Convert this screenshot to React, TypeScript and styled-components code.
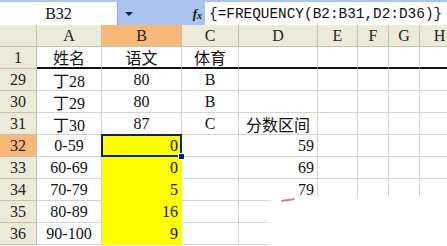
import React from 'react';
import styled, { createGlobalStyle } from 'styled-components';

const Global = createGlobalStyle`
  html, body { margin: 0; padding: 0; background: #fff; overflow: hidden; }
  body { width: 447px; height: 246px; }
`;

const Frame = styled.div`
  position: relative;
  width: 447px;
  height: 246px;
  overflow: hidden;
  background: #fff;
  display: flex;
  flex-direction: column;
`;

const FormulaBar = styled.div`
  display: flex;
  height: 25px;
  flex: none;
  box-sizing: border-box;
  padding-top: 2px;
  background: #a9c4ef;
`;

const NameBox = styled.div`
  width: 117px;
  background: #fff;
  border-right: 1px solid #8aa9dc;
  display: flex;
  align-items: center;
  justify-content: center;
  font: 16px "Liberation Serif", serif;
  color: #111;
`;

const DropZone = styled.div`
  width: 87px;
  display: flex;
  align-items: center;
  padding: 0 3px 0 7px;
  box-sizing: border-box;
`;

const Arrow = styled.span`
  width: 0;
  height: 0;
  border-left: 4px solid transparent;
  border-right: 4px solid transparent;
  border-top: 4px solid #0c1e4a;
`;

const Fx = styled.span`
  margin-left: auto;
  font: italic bold 13px "Liberation Serif", serif;
  color: #111;
  sub { font-size: 10px; vertical-align: -1px; }
`;

const FormulaInput = styled.div`
  flex: 1;
  background: #fff;
  padding-left: 4px;
  display: flex;
  align-items: center;
  font: 14.4px "Liberation Mono", monospace;
  color: #111;
  white-space: nowrap;
  overflow: hidden;
`;

const Sheet = styled.div`
  display: grid;
  grid-template-columns: 37px 65px 80px 57px 79px 40px 31px 31px 40px;
  grid-auto-rows: 22px;
`;

type Align = 'left' | 'center' | 'right';

const Header = styled.div<{ $active?: boolean }>`
  box-sizing: border-box;
  background: ${p => (p.$active ? '#f8b878' : '#ecead9')};
  border-right: 1px solid #c4c0aa;
  border-bottom: 1px solid #c4c0aa;
  display: flex;
  align-items: center;
  justify-content: center;
  font: 16px "Liberation Serif", serif;
  color: #222;
`;

const Cell = styled.div<{ $align: Align; $fill?: boolean; $thick?: boolean; $selected?: boolean }>`
  position: relative;
  box-sizing: border-box;
  background: ${p => (p.$fill ? '#ffff00' : '#fff')};
  border-right: 1px solid ${p => (p.$fill ? '#ffff00' : '#d4d4d4')};
  border-bottom: ${p => (p.$thick ? '2px solid #111' : `1px solid ${p.$fill ? '#ffff00' : '#d4d4d4'}`)};
  display: flex;
  align-items: center;
  justify-content: ${p => (p.$align === 'left' ? 'flex-start' : p.$align === 'right' ? 'flex-end' : 'center')};
  padding: 0 3px;
  font: 16px "Liberation Serif", "Noto Sans CJK SC", serif;
  color: #111;
  white-space: nowrap;
  ${p =>
    p.$selected &&
    `
    &::after {
      content: '';
      position: absolute;
      left: -1px; top: -1px; right: -1px; bottom: -1px;
      border: 2px solid #0a246a;
    }
  `}
`;

const Handle = styled.span`
  position: absolute;
  right: -4px;
  bottom: -4px;
  width: 5px;
  height: 5px;
  background: #0a246a;
  border: 1px solid #fff;
  z-index: 2;
`;

const Smudge = styled.div`
  position: absolute;
  left: 271px;
  top: 198px;
  width: 190px;
  height: 60px;
  background: #fff;
  border-radius: 7px;
  box-shadow: 0 0 3px 2px rgba(255, 255, 255, 0.9);
  &::before {
    content: '';
    position: absolute;
    left: 10px;
    top: 1px;
    width: 14px;
    height: 2px;
    border-radius: 2px;
    background: rgba(190, 40, 40, 0.6);
    transform: rotate(-8deg);
  }
`;

type C = { t?: string; a?: Align; fill?: boolean; sel?: boolean };

const cols = ['A', 'B', 'C', 'D', 'E', 'F', 'G', 'H'];

const rows: { n: string; cells: C[]; thick?: boolean; active?: boolean }[] = [
  { n: '1', thick: true, cells: [{ t: '姓名' }, { t: '语文' }, { t: '体育' }] },
  { n: '29', cells: [{ t: '丁28' }, { t: '80' }, { t: 'B' }] },
  { n: '30', cells: [{ t: '丁29' }, { t: '80' }, { t: 'B' }] },
  { n: '31', cells: [{ t: '丁30' }, { t: '87' }, { t: 'C' }, { t: '分数区间' }] },
  { n: '32', active: true, cells: [{ t: '0-59' }, { t: '0', a: 'right', fill: true, sel: true }, {}, { t: '59', a: 'right' }] },
  { n: '33', cells: [{ t: '60-69' }, { t: '0', a: 'right', fill: true }, {}, { t: '69', a: 'right' }] },
  { n: '34', cells: [{ t: '70-79' }, { t: '5', a: 'right', fill: true }, {}, { t: '79', a: 'right' }] },
  { n: '35', cells: [{ t: '80-89' }, { t: '16', a: 'right', fill: true }, {}, {}] },
  { n: '36', cells: [{ t: '90-100' }, { t: '9', a: 'right', fill: true }, {}, {}] },
];

export default function App() {
  return (
    <Frame>
      <Global />
      <FormulaBar>
        <NameBox>B32</NameBox>
        <DropZone>
          <Arrow />
          <Fx>
            f<sub>x</sub>
          </Fx>
        </DropZone>
        <FormulaInput>{'{=FREQUENCY(B2:B31,D2:D36)}'}</FormulaInput>
      </FormulaBar>
      <Sheet>
        <Header />
        {cols.map(c => (
          <Header key={c} $active={c === 'B'}>
            {c}
          </Header>
        ))}
        {rows.map(r => (
          <React.Fragment key={r.n}>
            <Header $active={r.active}>{r.n}</Header>
            {cols.map((c, i) => {
              const cell = r.cells[i] || {};
              return (
                <Cell
                  key={c}
                  $align={cell.a || 'center'}
                  $fill={cell.fill}
                  $thick={r.thick}
                  $selected={cell.sel}
                >
                  {cell.t}
                  {cell.sel && <Handle />}
                </Cell>
              );
            })}
          </React.Fragment>
        ))}
      </Sheet>
      <Smudge />
    </Frame>
  );
}
